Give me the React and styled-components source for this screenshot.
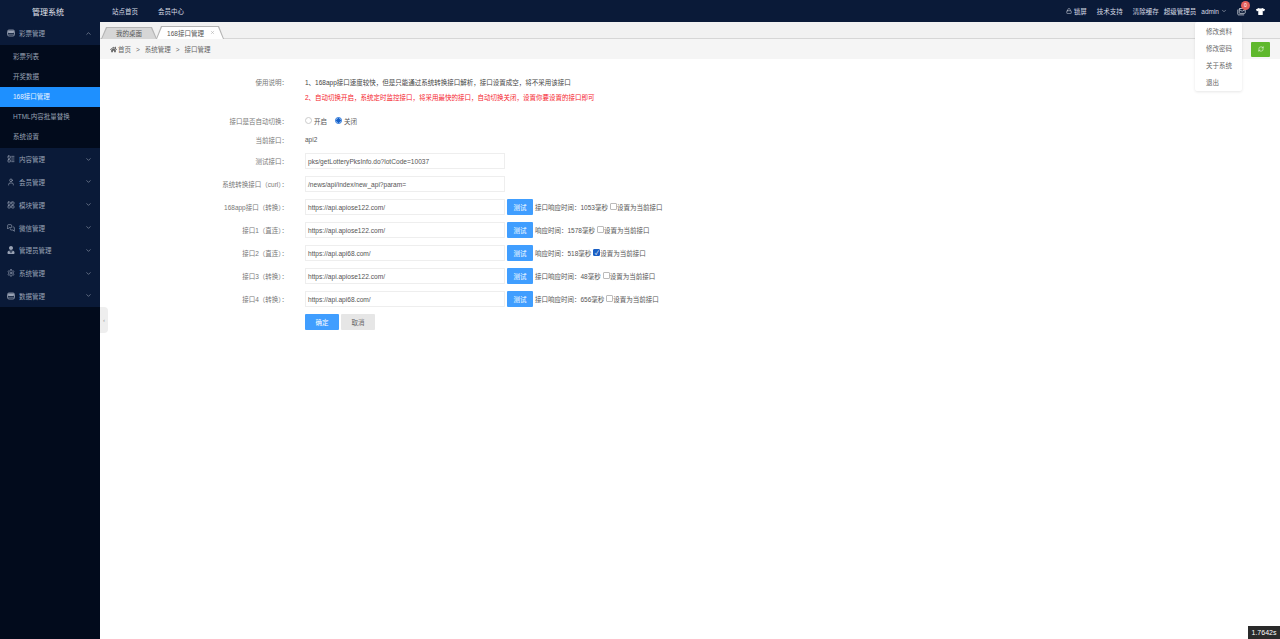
import styled, { createGlobalStyle } from "styled-components";
import { FaHome, FaUserTie, FaTshirt } from "react-icons/fa";
import {
  LuChevronUp, LuChevronDown, LuLayoutList, LuUser, LuLayoutGrid,
  LuMessagesSquare, LuSettings, LuLock, LuRefreshCw, LuMails, LuX,
} from "react-icons/lu";

const FONT = `"Liberation Sans", "Noto Sans CJK SC", sans-serif`;

const Global = createGlobalStyle`
  html, body { margin: 0; padding: 0; height: 100%; background: #fff; overflow: hidden; }
  body { font-family: ${FONT}; font-size: 6.5px; color: #555; }
  #root { height: 100%; }
  * { box-sizing: border-box; }
`;

const Page = styled.div`
  width: 1280px;
  height: 639px;
  display: flex;
  flex-direction: column;
  position: relative;
  overflow: hidden;
`;

/* top bar */
const TopBar = styled.header`
  height: 22px;
  flex: none;
  display: flex;
  align-items: center;
  background: #0a1a38;
  color: #d5d9e2;
`;
const Brand = styled.div`
  width: 96px;
  text-align: center;
  font-size: 8px;
  color: #e4e7ee;
`;
const TopNav = styled.nav`
  display: flex;
  gap: 20px;
  padding-left: 16px;
  a { color: #d5d9e2; }
`;
const TopRight = styled.div`
  margin-left: auto;
  display: flex;
  align-items: center;
  padding-right: 15px;
`;
const TopItem = styled.span`
  display: inline-flex;
  align-items: center;
  gap: 2px;
  margin-left: ${p => p.$gap ?? 10}px;
  position: relative;
`;
const Badge = styled.span`
  position: absolute;
  top: -6px;
  right: -4px;
  width: 9px;
  height: 9px;
  border-radius: 50%;
  background: #e2605c;
  color: #fff;
  font-size: 5px;
  line-height: 9px;
  text-align: center;
`;

/* main area */
const Body = styled.div`
  flex: 1;
  display: flex;
  min-height: 0;
`;
const Sidebar = styled.aside`
  width: 100px;
  flex: none;
  background: #020b1c;
  color: #a8b0c0;
`;
const Group = styled.div`
  height: 22.8px;
  display: flex;
  align-items: center;
  padding: 0 8px 0 7px;
  background: #0a1a38;
  color: #99a2b4;
  svg:first-child { margin-right: 4px; flex: none; }
  span { flex: 1; }
`;
const SubList = styled.div`
  padding: 2px 0 1px;
`;
const SubItem = styled.div`
  height: 20px;
  line-height: 20px;
  padding-left: 13px;
  color: ${p => (p.$active ? "#e8f2ff" : "#99a2b4")};
  background: ${p => (p.$active ? "#1e90ff" : "transparent")};
`;
const Collapse = styled.div`
  position: absolute;
  left: 100px;
  top: 307px;
  width: 8px;
  height: 26px;
  background: #eee;
  border-radius: 0 4px 4px 0;
  color: #999;
  font-size: 6px;
  line-height: 26px;
  text-align: center;
`;

const Content = styled.main`
  flex: 1;
  min-width: 0;
  display: flex;
  flex-direction: column;
`;
const TabBar = styled.div`
  height: 17px;
  flex: none;
  display: flex;
  align-items: flex-end;
  padding-left: 1px;
  background: #f1f1f1;
  border-bottom: 1px solid #d6d6d6;
`;
const TAB_SHAPE = "polygon(5px 0, calc(100% - 5px) 0, 100% 100%, 0 100%)";
const Tab = styled.div`
  height: ${p => (p.$active ? 13 : 12)}px;
  width: ${p => p.$w}px;
  margin-left: ${p => p.$ml ?? 0}px;
  margin-bottom: -1px;
  position: relative;
  display: flex;
  align-items: center;
  justify-content: center;
  color: #555;
  background: #b4b4b4;
  clip-path: ${TAB_SHAPE};
  &::before {
    content: "";
    position: absolute;
    inset: 1px 1px 0 1px;
    background: ${p => (p.$active ? "#fff" : "#d6d6d6")};
    clip-path: ${TAB_SHAPE};
  }
`;
const TabText = styled.span`
  position: relative;
  display: inline-flex;
  align-items: center;
  gap: 6px;
  padding-left: ${p => p.$pl ?? 0}px;
`;
const Crumbs = styled.div`
  height: 20px;
  flex: none;
  display: flex;
  align-items: center;
  justify-content: space-between;
  padding: 0 10px;
  background: #f5f5f5;
  color: #666;
`;
const CrumbPath = styled.div`
  display: flex;
  align-items: center;
  gap: 5px;
  svg { margin-right: -4px; }
`;
const GreenBtn = styled.button`
  width: 19px;
  height: 15px;
  border: none;
  padding: 0;
  border-radius: 1px;
  background: #5fb82c;
  color: #fff;
  display: flex;
  align-items: center;
  justify-content: center;
`;
const Dropdown = styled.div`
  position: absolute;
  left: 1195px;
  top: 22px;
  width: 47px;
  height: 69px;
  background: #fff;
  box-shadow: 0 1px 3px rgba(0, 0, 0, 0.1);
  border-radius: 2px;
  color: #666;
  padding-top: 1px;
`;
const DropItem = styled.div`
  height: 17px;
  line-height: 17px;
  padding-left: 11px;
`;

/* form */
const Form = styled.div`
  padding-top: 16px;
  display: flex;
  flex-direction: column;
`;
const Row = styled.div`
  display: grid;
  grid-template-columns: 188px 1fr;
  column-gap: 17px;
  height: ${p => p.$h ?? 23}px;
  margin-top: ${p => p.$mt ?? 0}px;
  align-items: center;
`;
const Label = styled.div`
  text-align: right;
  color: #777;
  white-space: nowrap;
`;
const TopLabel = styled(Label)`
  align-self: start;
  line-height: 15px;
`;
const Notes = styled.div`
  line-height: 15px;
`;
const Note = styled.div`
  color: ${p => (p.$red ? "#f5222d" : "#444")};
`;
const Inline = styled.div`
  display: flex;
  align-items: center;
  white-space: nowrap;
`;
const Field = styled.div`
  width: 200px;
  height: 16px;
  margin-top: 1px;
  line-height: 15px;
  padding-left: 2px;
  background: #fff;
  border: 1px solid #eee;
  font-size: 6.6px;
  color: #555;
`;
const Radio = styled.span`
  width: 7px;
  height: 7px;
  border-radius: 50%;
  margin-right: 2px;
  border: 1px solid ${p => (p.$on ? "#1e6fd9" : "#ccc")};
  background: ${p => (p.$on ? "radial-gradient(circle, #1661c9 2px, #fff 2.4px)" : "#fff")};
`;
const RadioText = styled.span`
  margin-right: 8px;
`;
const TestBtn = styled.button`
  width: 26px;
  height: 16px;
  margin: 1px 2px 0;
  border: none;
  padding: 0;
  border-radius: 1px;
  background: #409eff;
  color: #fff;
  font: 6.5px ${FONT};
`;
const Check = styled.span`
  width: 7px;
  height: 7px;
  margin: 0 0 0 2px;
  border-radius: 1px;
  border: 1px solid ${p => (p.$on ? "#1a5fc4" : "#bbb")};
  background: ${p => (p.$on ? "#1a5fc4" : "#fff")};
  color: #fff;
  font-size: 6px;
  line-height: 6px;
  text-align: center;
`;
const SubmitBtn = styled.button`
  width: 34px;
  height: 16px;
  margin-right: 2px;
  border: none;
  padding: 0;
  border-radius: 1px;
  background: ${p => (p.$ghost ? "#e6e6e6" : "#409eff")};
  color: ${p => (p.$ghost ? "#666" : "#fff")};
  font: 6.5px ${FONT};
`;
const Timer = styled.div`
  position: absolute;
  right: 0;
  bottom: 0;
  width: 32px;
  height: 13px;
  line-height: 13px;
  text-align: center;
  background: #2a2a2a;
  color: #fff;
  font-size: 7px;
`;

// filled box with a band, used by the lottery and data groups
const BoxIcon = ({ size = 8 }) => (
  <svg width={size} height={size} viewBox="0 0 16 16" fill="none">
    <rect x="1" y="2" width="14" height="12" rx="3" stroke="currentColor" strokeWidth="1.6" />
    <rect x="2" y="3" width="12" height="5" rx="1.5" fill="currentColor" />
    <path d="M1.5 10.5h13" stroke="currentColor" strokeWidth="1.2" />
  </svg>
);

const groupsAfter = [
  ["内容管理", LuLayoutList],
  ["会员管理", LuUser],
  ["模块管理", LuLayoutGrid],
  ["微信管理", LuMessagesSquare],
  ["管理员管理", FaUserTie],
  ["系统管理", LuSettings],
  ["数据管理", BoxIcon],
];

const apis = [
  ["168app接口（转换）：", "https://api.apiose122.com/", "接口响应时间：1053毫秒", false],
  ["接口1（直连）：", "https://api.apiose122.com/", "响应时间：1578毫秒", false],
  ["接口2（直连）：", "https://api.api68.com/", "响应时间：518毫秒", true],
  ["接口3（转换）：", "https://api.apiose122.com/", "接口响应时间：48毫秒", false],
  ["接口4（转换）：", "https://api.api68.com/", "接口响应时间：656毫秒", false],
];

export default function App() {
  return (
    <Page>
      <Global />
      <TopBar>
        <Brand>管理系统</Brand>
        <TopNav>
          <a>站点首页</a>
          <a>会员中心</a>
        </TopNav>
        <TopRight>
          <TopItem><LuLock size={6} />锁屏</TopItem>
          <TopItem>技术支持</TopItem>
          <TopItem>清除缓存</TopItem>
          <TopItem $gap={5}>超级管理员</TopItem>
          <TopItem $gap={5}>admin <LuChevronDown size={6} /></TopItem>
          <TopItem $gap={10}><LuMails size={9} /><Badge>0</Badge></TopItem>
          <TopItem $gap={10}><FaTshirt size={9} color="#fff" /></TopItem>
        </TopRight>
      </TopBar>
      <Body>
        <Sidebar>
          <Group>
            <BoxIcon /><span>彩票管理</span><LuChevronUp size={7} />
          </Group>
          <SubList>
            <SubItem>彩票列表</SubItem>
            <SubItem>开奖数据</SubItem>
            <SubItem $active>168接口管理</SubItem>
            <SubItem>HTML内容批量替换</SubItem>
            <SubItem>系统设置</SubItem>
          </SubList>
          {groupsAfter.map(([name, Icon]) => (
            <Group key={name}>
              <Icon size={8} /><span>{name}</span><LuChevronDown size={7} />
            </Group>
          ))}
        </Sidebar>
        <Content>
          <TabBar>
            <Tab $w={56}><TabText>我的桌面</TabText></Tab>
            <Tab $w={68} $ml={-1} $active>
              <TabText $pl={2}>168接口管理<LuX size={5} color="#999" /></TabText>
            </Tab>
          </TabBar>
          <Crumbs>
            <CrumbPath>
              <FaHome size={7} /> 首页 <span>&gt;</span> 系统管理 <span>&gt;</span> 接口管理
            </CrumbPath>
            <GreenBtn><LuRefreshCw size={6} /></GreenBtn>
          </Crumbs>
          <Form>
            <Row $h={30}>
              <TopLabel>使用说明：</TopLabel>
              <Notes>
                <Note>1、168app接口速度较快，但是只能通过系统转换接口解析，接口设置成空，将不采用该接口</Note>
                <Note $red>2、自动切换开启，系统定时监控接口，将采用最快的接口，自动切换关闭，设置你要设置的接口即可</Note>
              </Notes>
            </Row>
            <Row $h={19} $mt={6}>
              <Label>接口是否自动切换：</Label>
              <Inline>
                <Radio /><RadioText>开启</RadioText>
                <Radio $on /><RadioText>关闭</RadioText>
              </Inline>
            </Row>
            <Row $h={19}>
              <Label>当前接口：</Label>
              <Inline>api2</Inline>
            </Row>
            <Row>
              <Label>测试接口：</Label>
              <Field>pks/getLotteryPksInfo.do?lotCode=10037</Field>
            </Row>
            <Row>
              <Label>系统转换接口（curl）：</Label>
              <Field>/news/api/index/new_api?param=</Field>
            </Row>
            {apis.map(([label, url, time, on]) => (
              <Row key={label}>
                <Label>{label}</Label>
                <Inline>
                  <Field>{url}</Field>
                  <TestBtn>测试</TestBtn>
                  {time}
                  <Check $on={on}>{on ? "✓" : ""}</Check>
                  设置为当前接口
                </Inline>
              </Row>
            ))}
            <Row>
              <span />
              <Inline>
                <SubmitBtn>确定</SubmitBtn>
                <SubmitBtn $ghost>取消</SubmitBtn>
              </Inline>
            </Row>
          </Form>
        </Content>
      </Body>
      <Collapse>‹</Collapse>
      <Dropdown>
        <DropItem>修改资料</DropItem>
        <DropItem>修改密码</DropItem>
        <DropItem>关于系统</DropItem>
        <DropItem>退出</DropItem>
      </Dropdown>
      <Timer>1.7642s</Timer>
    </Page>
  );
}
